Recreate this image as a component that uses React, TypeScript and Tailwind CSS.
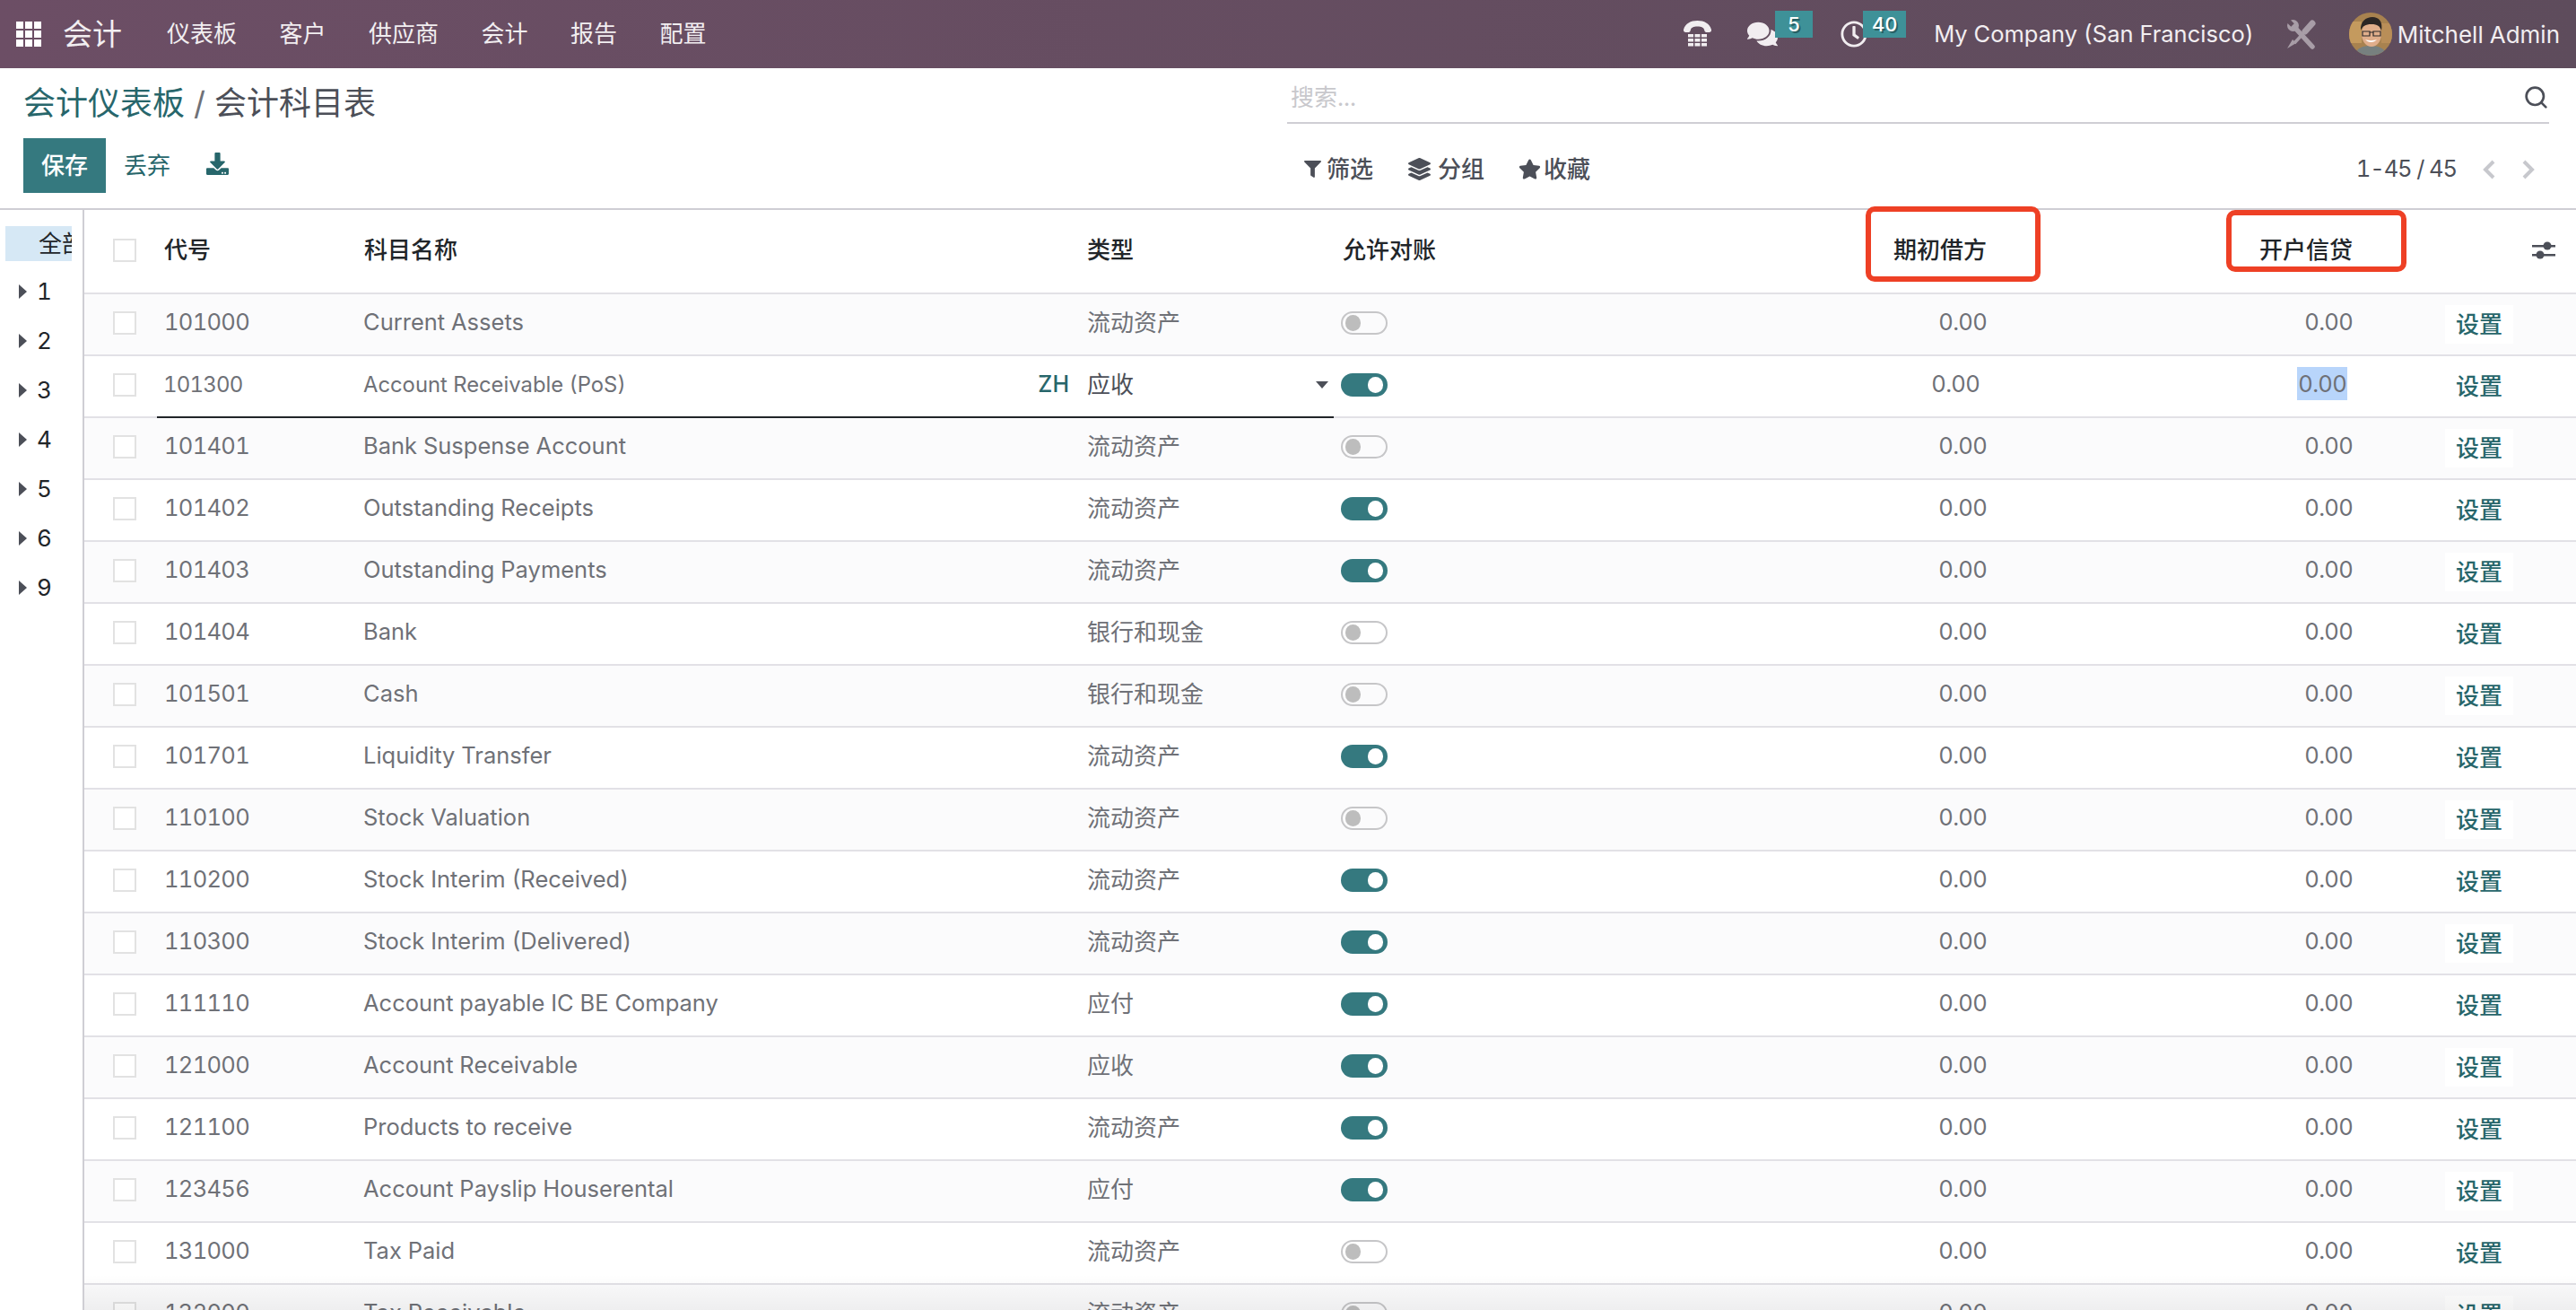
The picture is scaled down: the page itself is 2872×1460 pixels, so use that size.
import React from 'react';
import { Search } from 'lucide-react';
import { FaComments, FaRegClock, FaFilter, FaLayerGroup, FaStar, FaDownload } from 'react-icons/fa';

const menuItems = ['仪表板', '客户', '供应商', '会计', '报告', '配置'];
const sideItems = ['1', '2', '3', '4', '5', '6', '9'];

const accounts = [
  { code: '101000', name: 'Current Assets', type: '流动资产', on: false },
  { code: '101300', name: 'Account Receivable (PoS)', type: '应收', on: true, editing: true },
  { code: '101401', name: 'Bank Suspense Account', type: '流动资产', on: false },
  { code: '101402', name: 'Outstanding Receipts', type: '流动资产', on: true },
  { code: '101403', name: 'Outstanding Payments', type: '流动资产', on: true },
  { code: '101404', name: 'Bank', type: '银行和现金', on: false },
  { code: '101501', name: 'Cash', type: '银行和现金', on: false },
  { code: '101701', name: 'Liquidity Transfer', type: '流动资产', on: true },
  { code: '110100', name: 'Stock Valuation', type: '流动资产', on: false },
  { code: '110200', name: 'Stock Interim (Received)', type: '流动资产', on: true },
  { code: '110300', name: 'Stock Interim (Delivered)', type: '流动资产', on: true },
  { code: '111110', name: 'Account payable IC BE Company', type: '应付', on: true },
  { code: '121000', name: 'Account Receivable', type: '应收', on: true },
  { code: '121100', name: 'Products to receive', type: '流动资产', on: true },
  { code: '123456', name: 'Account Payslip Houserental', type: '应付', on: true },
  { code: '131000', name: 'Tax Paid', type: '流动资产', on: false },
  { code: '132000', name: 'Tax Receivable', type: '流动资产', on: false },
];

const gridCols = 'grid grid-cols-[89px_223px_806px_283px_305px_415px_408px_1fr]';

const AppsIcon = () => (
  <svg width="28" height="28" viewBox="0 0 28 28" fill="#fff">
    {[0, 10, 20].map((y) =>
      [0, 10, 20].map((x) => <rect key={`${x}-${y}`} x={x} y={y} width="8" height="8" />)
    )}
  </svg>
);

const PhoneIcon = () => (
  <svg width="33" height="30" viewBox="0 0 33 30" fill="#f1edf0">
    <path d="M1 10C3 3 9 0 16.500 0S30 3 32 10c.4 2-1 3-2.500 3h-3c-1.500 0-2-1-2.500-3-.4-2-3-3.500-7.500-3.500S9.400 8 9 10c-.5 2-1 3-2.500 3h-3C2 13 .6 12 1 10z" />
    {[15, 20, 25].map((y) =>
      [6, 13.500, 21].map((x) => <rect key={`${x}-${y}`} x={x} y={y} width="6" height="3.500" />)
    )}
  </svg>
);

const ToolsIcon = () => (
  <svg width="34" height="34" viewBox="0 0 34 34" fill="none" stroke="#a89da7">
    <path d="M8 8l21 23" strokeWidth="5.500" strokeLinecap="round" />
    <circle cx="7.500" cy="7.500" r="6.500" fill="#a89da7" strokeWidth="0" />
    <path d="M7 7L1 1" stroke="#5f4c5c" strokeWidth="5" />
    <path d="M29 5l-8 9" strokeWidth="7" strokeLinecap="round" />
    <path d="M21 14L9 27" strokeWidth="3.500" />
    <path d="M7 23l-6 10 10-6z" fill="#a89da7" strokeWidth="0" />
  </svg>
);

const Avatar = () => (
  <svg width="48" height="48" viewBox="0 0 48 48" className="rounded-full">
    <rect width="48" height="48" fill="#a8824f" />
    <rect x="0" y="10" width="14" height="24" fill="#c49a5e" />
    <rect x="36" y="12" width="12" height="22" fill="#b98e58" />
    <path d="M6 48c2-9 10-11 18-11s16 2 18 11z" fill="#77807f" />
    <ellipse cx="25" cy="24" rx="11" ry="14" fill="#e0ae8b" />
    <path d="M13 20c-1-10 6-15 13-15s12 5 10 15c-2-5-4-7-11-7s-10 2-12 7z" fill="#2c2624" />
    <path d="M15 21h8v5h-8zM27 21h8v5h-8zM23 22h4" fill="none" stroke="#2d2a2a" strokeWidth="1.200" />
    <path d="M18 30c3 4 10 4 13 0-3 1.500-10 1.500-13 0z" fill="#fff" />
  </svg>
);

const SlidersIcon = () => (
  <svg width="26" height="21" viewBox="0 0 26 21" fill="#4c4f58">
    <rect x="0" y="5" width="26" height="2.500" />
    <rect x="0" y="15" width="26" height="2.500" />
    <circle cx="17" cy="6" r="4.500" />
    <circle cx="9" cy="16" r="4.500" />
  </svg>
);

const Caret = () => (
  <svg width="9" height="16" viewBox="0 0 9 16" fill="#4c4f58">
    <path d="M0 0l9 8-9 8z" />
  </svg>
);

const PagerArrow = ({ d }: { d: string }) => (
  <svg width="16" height="22" viewBox="0 0 16 22" fill="none" stroke="#c7c8cd" strokeWidth="4">
    <path d={d} />
  </svg>
);

const Checkbox = () => <div className="h-[26px] w-[26px] border-2 border-[#e2e2e2] bg-white" />;

const Toggle = ({ on }: { on: boolean }) =>
  on ? (
    <div className="flex h-[26px] w-[52px] items-center justify-end rounded-full bg-[#35797f] pr-[5px]">
      <div className="h-[18px] w-[17px] rounded-full bg-white" />
    </div>
  ) : (
    <div className="flex h-[26px] w-[52px] items-center rounded-full border-2 border-[#c6c6c8] pl-[3px]">
      <div className="h-[18px] w-[17px] rounded-full bg-[#bdbdbd]" />
    </div>
  );

const AccountRow = ({ row, index }: { row: (typeof accounts)[number]; index: number }) => {
  const stripe = index % 2 === 0 ? 'bg-[#fbfbfc]' : 'bg-white';
  return (
    <div className={`${gridCols} relative h-[69px] shrink-0 items-center border-b-2 border-[#e2e1e6] pb-[4px] ${stripe}`}>
      <div className="pl-[32px]">
        <Checkbox />
      </div>
      <div className={row.editing ? 'ml-[-1px] text-[24px] tracking-[-0.8px]' : 'text-[25.500px] tracking-[-0.7px]'}>{row.code}</div>
      {row.editing ? (
        <div className="flex items-center justify-between pr-[20px] text-[23.800px]">
          <span className="ml-[-1px]">{row.name}</span>
          <span className="text-[25px] font-medium text-[#27666b]">ZH</span>
        </div>
      ) : (
        <div className="ml-[-1px] text-[25.500px]">{row.name}</div>
      )}
      {row.editing ? (
        <div className="flex items-center justify-between pr-[14px] text-[#4c4f58]">
          <span>{row.type}</span>
          <svg width="14" height="8" viewBox="0 0 14 8" fill="#4c4f58">
            <path d="M0 0h14L7 8z" />
          </svg>
        </div>
      ) : (
        <div>{row.type}</div>
      )}
      <div>
        <Toggle on={row.on} />
      </div>
      <div className={`text-right text-[25.500px] tracking-[-0.7px] ${row.editing ? 'pr-[8px]' : ''}`}>0.00</div>
      <div className={`text-right text-[25.500px] tracking-[-0.7px] ${row.editing ? 'pr-[6px]' : ''}`}>
        {row.editing ? <span className="bg-[#b8d5fb] py-[3px] pl-[1px] pr-[1px]">0.00</span> : '0.00'}
      </div>
      <div className="pl-[103px] pt-[3px]">
        <a className="inline-block bg-white px-[12px] py-[2px] font-medium text-[#27666b]">设置</a>
      </div>
      {row.editing && <div className="absolute bottom-[-2px] left-[81px] h-[2px] w-[1312px] bg-[#212529]" />}
    </div>
  );
};

export default function App() {
  return (
    <div className="relative flex h-[1460px] w-[2872px] flex-col overflow-hidden bg-white font-['Inter','Noto_Sans_CJK_SC',sans-serif] text-[26px] text-[#6f7177] tabular-nums">
      <nav className="flex h-[76px] shrink-0 items-center bg-gradient-to-r from-[#6c4e65] to-[#5e4c5c] pl-[18px] pr-[18px] text-[#f2eef1]">
        <AppsIcon />
        <span className="ml-[24px] text-[33px] leading-none">会计</span>
        <div className="ml-[50px] flex gap-[47.500px]">
          {menuItems.map((item) => (
            <span key={item} className="leading-none">{item}</span>
          ))}
        </div>
        <div className="ml-auto flex items-center">
          <PhoneIcon />
          <div className="relative ml-[39px]">
            <FaComments size={34} color="#f1edf0" />
            <span className="absolute left-[31px] top-[-9px] flex h-[30px] w-[42px] items-center justify-center bg-[#3e9198] text-[22px] font-medium text-white [text-shadow:2px_2px_0_rgba(0,0,0,0.35)]">5</span>
          </div>
          <div className="relative ml-[70px]">
            <FaRegClock size={30} color="#f1edf0" />
            <span className="absolute left-[25px] top-[-11px] flex h-[30px] w-[48px] items-center justify-center bg-[#3e9198] text-[22px] font-medium text-white [text-shadow:2px_2px_0_rgba(0,0,0,0.35)]">40</span>
          </div>
          <span className="ml-[74px] whitespace-nowrap text-[25.500px]">My Company (San Francisco)</span>
          <div className="ml-[36px]">
            <ToolsIcon />
          </div>
          <div className="ml-[36px]">
            <Avatar />
          </div>
          <span className="ml-[6px] whitespace-nowrap">Mitchell Admin</span>
        </div>
      </nav>

      <header className="flex h-[158px] shrink-0 border-b-2 border-[#cfced4]">
        <div className="w-[1435px] shrink-0 pl-[26px]">
          <div className="mt-[17px] flex h-[44px] items-center text-[36px] leading-none text-[#4c4f58]">
            <span className="text-[#27666b]">会计仪表板</span>
            <span className="mx-[10px] text-[#6f7177]">/</span>
            <span>会计科目表</span>
          </div>
          <div className="mt-[17px] flex items-center">
            <button className="h-[61px] w-[92px] bg-[#35797f] font-medium text-white">保存</button>
            <button className="ml-[20px] text-[#27666b]">丢弃</button>
            <FaDownload size={25} color="#27666b" className="ml-[40px] mt-[-4px]" />
          </div>
        </div>
        <div className="flex-1 pr-[30px]">
          <div className="flex h-[62px] items-center justify-between border-b-2 border-[#cfced4] pl-[4px] pt-[5px] text-[#c8c8cc]">
            <span>搜索...</span>
            <Search size={29} color="#4c4f58" strokeWidth={2.200} />
          </div>
          <div className="mt-[31px] flex items-center font-medium text-[#4c4f58]">
            <FaFilter size={19} className="ml-[19px]" />
            <span className="ml-[6px]">筛选</span>
            <FaLayerGroup size={25} className="ml-[39px]" />
            <span className="ml-[8px]">分组</span>
            <FaStar size={25} className="ml-[38px]" />
            <span className="ml-[3px]">收藏</span>
            <span className="ml-auto text-[25.500px] font-normal tracking-[-1.100px]">1-45 / 45</span>
            <div className="ml-[28px]">
              <PagerArrow d="M13 2L4 11l9 9" />
            </div>
            <div className="ml-[28px] mr-[15px]">
              <PagerArrow d="M3 2l9 9-9 9" />
            </div>
          </div>
        </div>
      </header>

      <div className="flex min-h-0 flex-1">
        <aside className="w-[94px] shrink-0 border-r-2 border-[#cfced4] pt-[18px] text-[#212529]">
          <div className="ml-[6px] h-[39px] w-[74px] overflow-hidden whitespace-nowrap bg-[#d6e8f5] pl-[37px] leading-[39px]">全部</div>
          <div className="mt-[18px] flex flex-col gap-[23px]">
            {sideItems.map((item) => (
              <div key={item} className="flex h-[32px] items-center pl-[21px] leading-none">
                <Caret />
                <span className="ml-[11px]">{item}</span>
              </div>
            ))}
          </div>
        </aside>

        <main className="min-w-0 flex-1">
          <div className={`${gridCols} h-[94px] items-center border-b-2 border-[#e2e1e6] pb-[3px] font-medium text-[#212529]`}>
            <div className="pl-[32px]">
              <Checkbox />
            </div>
            <div>代号</div>
            <div>科目名称</div>
            <div>类型</div>
            <div className="pl-[2px]">允许对账</div>
            <div className="text-right">期初借方</div>
            <div className="text-right">开户信贷</div>
            <div className="flex justify-end pr-[23px]">
              <SlidersIcon />
            </div>
          </div>
          {accounts.map((row, index) => (
            <AccountRow key={row.code} row={row} index={index} />
          ))}
        </main>
      </div>

      {/* red annotation boxes on top of the screenshot */}
      <div className="absolute left-[2080px] top-[230px] h-[84px] w-[195px] rounded-[10px] border-[6px] border-[#ee4025]" />
      <div className="absolute left-[2482px] top-[234px] h-[69px] w-[201px] rounded-[10px] border-[6px] border-[#ee4025]" />
      <div className="pointer-events-none absolute bottom-0 left-[94px] right-0 h-[40px] bg-gradient-to-b from-transparent to-[#0000000d]" />
    </div>
  );
}
